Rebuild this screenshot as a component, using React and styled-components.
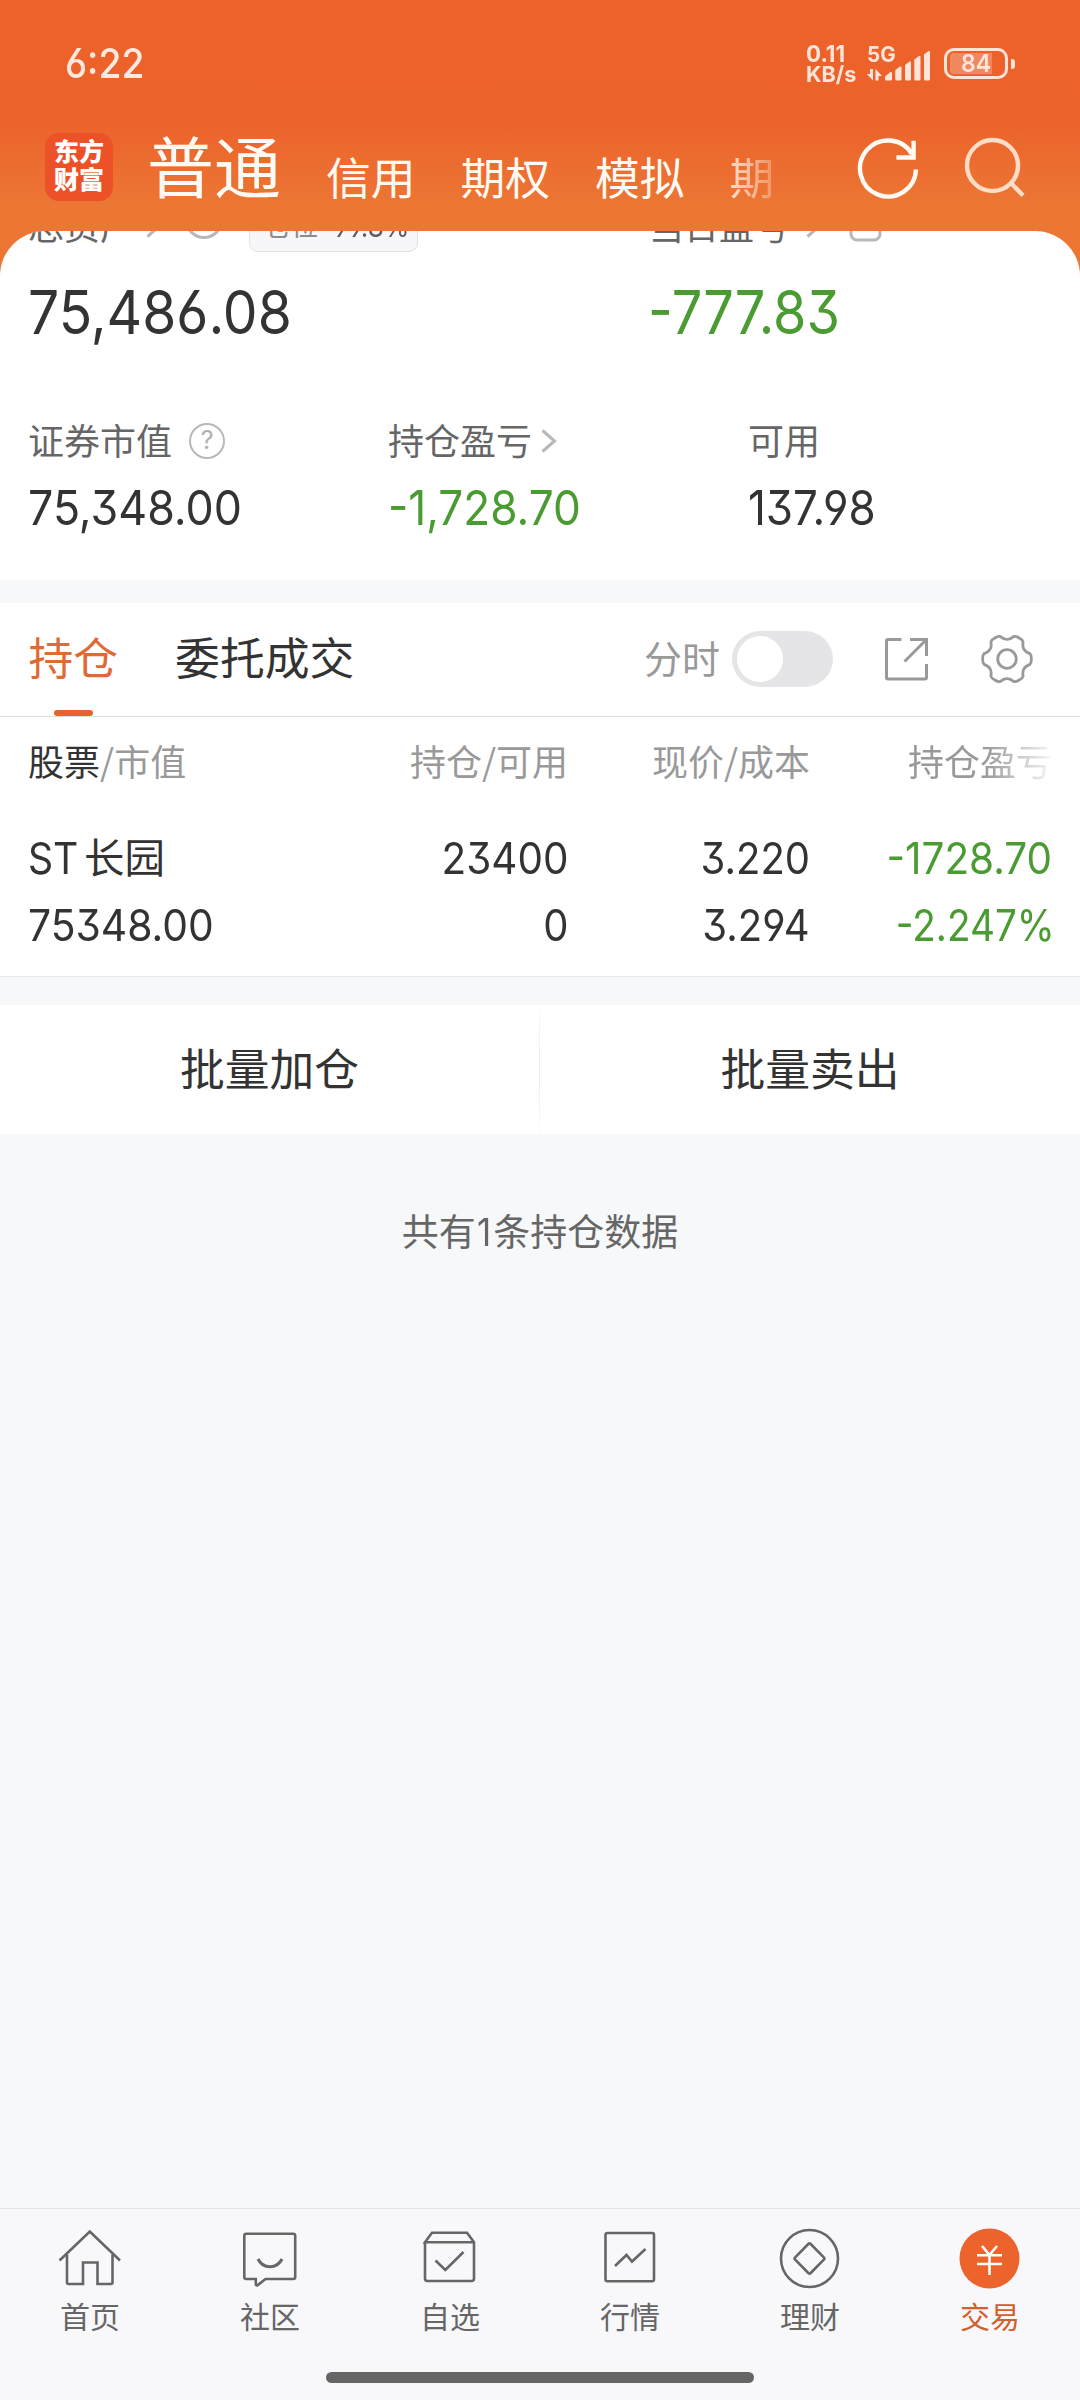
import React from 'react';
import styled, { createGlobalStyle, css } from 'styled-components';

const CJK = "'Noto Sans CJK SC', 'Noto Sans', sans-serif";
const NUM = "Inter, 'Noto Sans CJK SC', sans-serif";
const INK = '#333333';
const GREY = '#666666';
const LIGHT = '#999999';
const GREEN = '#4b9b33';
const ORANGE = '#ec632b';
const STATUS = '#ffe5d9';

const Global = createGlobalStyle`
  * { box-sizing: border-box; }
  html, body { margin: 0; padding: 0; background: #f7f8fa; }
`;

const Screen = styled.div`
  width: 1080px;
  height: 2400px;
  display: flex;
  flex-direction: column;
  overflow: hidden;
  font-family: ${CJK};
  color: ${INK};
  background: linear-gradient(#ee622b 0, #ec622b 118px, #ec7634 205px, #ee7634 280px, #f7f8fa 280px);
`;

/* Latin digits, slightly condensed */
const Num = styled.span`
  display: inline-block;
  flex: none;
  align-self: ${(p) => p.$self || 'auto'};
  font-family: ${NUM};
  font-feature-settings: 'cv03', 'cv04', 'cv09', 'case';
  font-size: ${(p) => p.$size}px;
  line-height: ${(p) => p.$lh || p.$size}px;
  font-weight: ${(p) => p.$weight || 420};
  color: ${(p) => p.$color || INK};
  margin: ${(p) => p.$m || 0};
  white-space: nowrap;
  transform: scaleX(${(p) => p.$sx || 0.92});
  transform-origin: ${(p) => (p.$right ? 'right' : 'left')} center;
`;

/* Chinese text; the negative margin centres the glyphs optically */
const Text = styled.span`
  flex: none;
  margin-top: -0.11em;
  font-size: ${(p) => p.$size}px;
  line-height: ${(p) => p.$size}px;
  color: ${(p) => p.$color || INK};
  white-space: nowrap;
`;

const Glyph = styled.svg`
  display: block;
  flex: none;
  fill: none;
  stroke: ${(p) => p.$color || '#b8b8b8'};
  stroke-width: ${(p) => p.$w || 3};
  margin: ${(p) => p.$m || 0};
`;

/* ---------- status bar ---------- */
const StatusBar = styled.div`
  height: 118px;
  flex: none;
  padding: 9px 65px 0 65px;
  display: flex;
  align-items: center;
  justify-content: space-between;
`;
const StatusRight = styled.div`
  display: flex;
  align-items: center;
  height: 36px;
`;
const Speed = styled.div`
  width: 60px;
  display: flex;
  flex-direction: column;
  align-items: flex-start;
`;
const Signal = styled.div`
  position: relative;
  width: 66px;
  height: 36px;
  margin-right: 12px;
`;
const Network = styled.div`
  position: absolute;
  left: 1px;
  top: -2px;
  display: flex;
`;
const Bars = styled.svg`
  display: block;
  width: 66px;
  height: 36px;
  fill: ${STATUS};
`;
const Battery = styled.div`
  width: 64px;
  height: 31px;
  border: 3px solid ${STATUS};
  border-radius: 10px;
  padding: 2px 3px;
  display: flex;
`;
const BatteryLevel = styled.div`
  width: 42px;
  border-radius: 4px 0 0 4px;
  background: rgba(255, 255, 255, 0.25);
  display: flex;
  align-items: center;
  padding-left: 11px;
`;
const Nub = styled.div`
  width: 4px;
  height: 10px;
  margin-left: 3px;
  border-radius: 1px 3px 3px 1px;
  background: ${STATUS};
`;

/* ---------- account header ---------- */
const Header = styled.header`
  height: 113px;
  flex: none;
  padding-left: 45px;
  display: flex;
  align-items: flex-start;
`;
const Logo = styled.div`
  width: 68px;
  height: 68px;
  margin-top: 15px;
  border-radius: 14px;
  background: #ec5127;
  color: #fff;
  display: flex;
  flex-direction: column;
  align-items: center;
  padding-top: 5px;
  gap: 3px;
`;
const LogoLine = styled.span`
  font-size: 25px;
  line-height: 25px;
  font-weight: 900;
`;
const Accounts = styled.nav`
  width: 656px;
  height: 113px;
  margin-left: 34px;
  display: flex;
  align-items: baseline;
  gap: 44.9px;
  color: #fffaf3;
`;
const Account = styled.span`
  font-size: ${(p) => (p.$active ? 67 : 44.8)}px;
  line-height: 96px;
  white-space: nowrap;
  flex: none;
  transform: translateY(${(p) => (p.$active ? -2 : 0)}px);
  ${(p) =>
    p.$faded &&
    css`
      mask-image: linear-gradient(90deg, rgba(0, 0, 0, 0.8) 0, rgba(0, 0, 0, 0.25) 100%);
    `}
`;
const HeaderIcon = styled.svg`
  width: 66px;
  height: 66px;
  margin-top: 17px;
  margin-left: ${(p) => p.$gap || 0}px;
  flex: none;
  fill: none;
  stroke: ${(p) => p.$color};
  stroke-width: 4.4;
`;

/* ---------- assets ---------- */
const Assets = styled.section`
  height: 349px;
  flex: none;
  background: #fff;
  border-radius: 45px 45px 0 0;
  overflow: hidden;
  padding: 0 28px;
`;
const ClippedRow = styled.div`
  height: 52px;
  margin-top: -31px;
  display: grid;
  grid-template-columns: 621px 1fr;
`;
const ClippedCell = styled.div`
  display: flex;
  align-items: center;
`;
const Badge = styled.div`
  height: 52px;
  width: 169px;
  margin-left: 26px;
  border: 1.5px solid #e1e1e6;
  border-radius: 9px;
  background: #f7f7fa;
  display: flex;
  align-items: center;
  padding-left: 14px;
`;
const Totals = styled.div`
  height: 121px;
  padding-bottom: 1px;
  display: grid;
  align-items: center;
  grid-template-columns: 621px 1fr;
`;
const Stats = styled.div`
  padding-top: 50px;
  display: grid;
  grid-template-columns: 360px 360px 1fr;
`;
const Stat = styled.div`
  display: flex;
  flex-direction: column;
  align-items: flex-start;
  gap: 25px;
`;
const StatLabel = styled.div`
  display: flex;
  align-items: center;
  height: 36px;
`;
const Help = styled.div`
  width: 36px;
  height: 36px;
  margin-left: 17px;
  border: 2.5px solid #b8b8b8;
  border-radius: 50%;
  color: #b0b0b0;
  font-family: ${NUM};
  font-size: 25px;
  line-height: 31px;
  text-align: center;
`;

/* ---------- holdings ---------- */
const Gap = styled.div`
  height: ${(p) => p.$h}px;
  flex: none;
  background: #f7f8fa;
  border-top: ${(p) => (p.$line ? '1px solid #e8e9ec' : 'none')};
`;
const Tabs = styled.div`
  height: 114px;
  flex: none;
  background: #fff;
  border-bottom: 1px solid #dedfe1;
  padding: 0 45px 0 28.5px;
  display: flex;
`;
const Tab = styled.div`
  height: 113px;
  margin-right: 57px;
  display: flex;
  flex-direction: column;
  align-items: center;
  justify-content: space-between;
  font-size: 44.8px;
  line-height: 106px;
  color: ${(p) => (p.$active ? '#df6a36' : INK)};
  ${(p) =>
    p.$active &&
    css`
      &::after {
        content: '';
        width: 39px;
        height: 6px;
        border-radius: 3px;
        background: #e9622e;
      }
    `}
`;
const Tools = styled.div`
  margin-left: auto;
  display: flex;
  align-items: center;
  height: 112px;
`;
const Toggle = styled.div`
  width: 101px;
  height: 56px;
  margin-left: 12px;
  border-radius: 28px;
  background: #e5e5e7;
  display: flex;
  align-items: center;
  padding-left: 5px;
  &::after {
    content: '';
    width: 46px;
    height: 46px;
    border-radius: 50%;
    background: #fff;
  }
`;
const Table = styled.div`
  height: 259px;
  flex: none;
  background: #fff;
  padding: 27px 28px 0;
`;
const Row = styled.div`
  height: ${(p) => p.$h}px;
  margin-bottom: ${(p) => p.$gap || 0}px;
  display: grid;
  grid-template-columns: 300px 240px 242px 1fr;
`;
const Cell = styled.div`
  display: flex;
  justify-content: ${(p) => (p.$left ? 'flex-start' : 'flex-end')};
  align-items: center;
`;
const Faded = styled(Cell)`
  mask-image: linear-gradient(90deg, #000 175px, transparent 248px);
`;
const Actions = styled.div`
  height: 129px;
  flex: none;
  background: #fff;
  display: grid;
  grid-template-columns: 539px 1px 540px;
`;
const Action = styled.button`
  border: 0;
  padding: 0 0 7px;
  background: none;
  font-family: ${CJK};
  font-size: 44.8px;
  line-height: 45px;
  color: ${INK};
`;
const Divider = styled.div`
  background: linear-gradient(#fafafb, #ececef, #fafafb);
`;
const Summary = styled.div`
  flex: 1;
  background: #f7f8fa;
  padding-top: 78px;
  display: flex;
  align-items: flex-start;
  justify-content: center;
  font-size: 37px;
  line-height: 37px;
  color: ${GREY};
`;

/* ---------- bottom navigation ---------- */
const Nav = styled.nav`
  height: 192px;
  flex: none;
  background: #f8f8fb;
  border-top: 1px solid #e4e4e8;
`;
const NavItems = styled.div`
  height: 163px;
  padding-top: 19px;
  display: grid;
  grid-template-columns: repeat(6, 1fr);
`;
const NavItem = styled.div`
  display: flex;
  flex-direction: column;
  align-items: center;
  gap: 8px;
  font-size: 30px;
  line-height: 30px;
  color: ${(p) => (p.$active ? '#d2602c' : GREY)};
`;
const Indicator = styled.div`
  width: 428px;
  height: 11px;
  margin: 0 auto;
  border-radius: 6px;
  background: #666;
`;

const Chevron = ({ m }) => (
  <Glyph width="16" height="26" viewBox="0 0 16 26" $m={m}>
    <path d="M1.500 2.500 L13.500 13 L1.500 23.500" />
  </Glyph>
);

const polar = (r, deg) => {
  const a = (deg * Math.PI) / 180;
  return `${(28 + r * Math.cos(a)).toFixed(2)} ${(28 + r * Math.sin(a)).toFixed(2)}`;
};
const gearPath = () => {
  let d = `M${polar(23.6, -13)}`;
  for (let a = 0; a < 360; a += 60) {
    d += ` Q${polar(24.8, a - 9)} ${polar(24.3, a)} Q${polar(24.8, a + 9)} ${polar(23.6, a + 13)}`;
    d += ` C${polar(20.4, a + 19)} ${polar(19.6, a + 23)} ${polar(19.6, a + 30)}`;
    d += ` C${polar(19.6, a + 37)} ${polar(20.4, a + 41)} ${polar(23.6, a + 47)}`;
  }
  return d + 'Z';
};

const NAV = [
  {
    label: '首页',
    icon: (
      <>
        <path d="M1.500 32.500 L31.800 3.500 L62 32.500" />
        <path d="M9 26.500 V54.500 Q9 56 10.500 56 H25 V34.500 H39.500 V56 H53 Q54.500 56 54.500 54.500 V26.500" />
      </>
    ),
  },
  {
    label: '社区',
    icon: (
      <>
        <path d="M8.300 5.800 H55.200 Q57.200 5.800 57.200 7.800 V49 Q57.200 51 55.200 51 H27.500 L19.500 57.300 Q17.800 58 17.800 56 V51 H8.300 Q6.300 51 6.300 49 V7.800 Q6.300 5.800 8.300 5.800Z" />
        <path strokeWidth="3" d="M20 31 C25 41.300 39 41.300 44 31" />
      </>
    ),
  },
  {
    label: '自选',
    icon: (
      <>
        <path d="M7 14.200 V50.500 Q7 53 9.500 53 H53.500 Q56 53 56 50.500 V14.200 L49 4.800 H14 L7 14.200 H56" />
        <path d="M17.500 32.500 L27.300 42 L45.500 24" />
      </>
    ),
  },
  {
    label: '行情',
    icon: (
      <>
        <rect x="7.500" y="5" width="48.500" height="48.200" rx="2" />
        <path d="M17 38 L28.500 27 L34 33.500 L47.500 21" />
      </>
    ),
  },
  {
    label: '理财',
    icon: (
      <>
        <circle cx="31.500" cy="30.500" r="28.500" />
        <path d="M30.300 16 Q31.500 14.800 32.700 16 L45.800 29.300 Q47 30.500 45.800 31.700 L32.700 45 Q31.500 46.200 30.300 45 L17.200 31.700 Q16 30.500 17.200 29.300Z" />
      </>
    ),
  },
  {
    label: '交易',
    active: true,
    icon: (
      <>
        <circle cx="31.500" cy="30.500" r="30" fill={ORANGE} stroke="none" />
        <path
          stroke="#fff"
          d="M24 18 L31.500 27 L39 18 M19 27.300 H44 M19 36 H44 M31.500 27 V47"
        />
      </>
    ),
  },
];

const STATS = [
  { label: '证券市值', value: '75,348.00', sx: 0.932, mark: 'help' },
  { label: '持仓盈亏', value: '-1,728.70', sx: 0.92, mark: 'chevron', color: GREEN },
  { label: '可用', value: '137.98', sx: 0.915 },
];

export default function App() {
  return (
    <Screen>
      <Global />
      <StatusBar>
        <Num $size={41} $weight={520} $color="#ffe9df" $sx={0.91}>6:22</Num>
        <StatusRight>
          <Speed>
            <Num $size={23.5} $lh={20} $weight={750} $color={STATUS} $sx={0.95}>0.11</Num>
            <Num $size={22} $lh={20} $weight={700} $color={STATUS} $sx={0.98}>KB/s</Num>
          </Speed>
          <Signal>
            <Bars viewBox="0 0 66 36">
              <path d="M19 33 V30.500 L24.500 26 Q26 25.500 26 27 V33 Q26 34.500 24.500 34.500 H20.500 Q19 34.500 19 33Z" />
              <path d="M29.300 33 V24 L34 20.500 Q35.500 20 35.500 21.500 V33 Q35.500 34.500 34 34.500 H30.800 Q29.300 34.500 29.300 33Z" />
              <path d="M39 33 V19 L43.500 15.500 Q45 15 45 16.500 V33 Q45 34.500 43.500 34.500 H40.500 Q39 34.500 39 33Z" />
              <path d="M48.300 33 V13.500 L53 10 Q54.500 9.500 54.500 11 V33 Q54.500 34.500 53 34.500 H49.800 Q48.300 34.500 48.300 33Z" />
              <path d="M58 33 V8.500 L62.500 5 Q64 4.500 64 6 V33 Q64 34.500 62.500 34.500 H59.500 Q58 34.500 58 33Z" />
              <path d="M4 23 H7 V34.500 L0.800 28 H4Z M9.500 34.500 H12.500 V30 H16 L9.500 23Z" />
            </Bars>
            <Network>
              <Num $size={21.5} $weight={700} $color={STATUS} $sx={0.96}>5G</Num>
            </Network>
          </Signal>
          <Battery>
            <BatteryLevel>
              <Num $size={24.5} $weight={600} $color={STATUS} $sx={0.94}>84</Num>
            </BatteryLevel>
          </Battery>
          <Nub />
        </StatusRight>
      </StatusBar>

      <Header>
        <Logo>
          <LogoLine>东方</LogoLine>
          <LogoLine>财富</LogoLine>
        </Logo>
        <Accounts>
          <Account $active>普通</Account>
          <Account>信用</Account>
          <Account>期权</Account>
          <Account>模拟</Account>
          <Account $faded>期</Account>
        </Accounts>
        <HeaderIcon viewBox="0 0 66 66" $color="#fffaf3" $gap={52}>
          <path d="M61 34.500 A28 28 0 1 1 57 19" />
          <path d="M58.600 5.700 V22.500 H41.400" />
        </HeaderIcon>
        <HeaderIcon viewBox="0 0 66 66" $color="#ffdcc6" $gap={41}>
          <circle cx="30.500" cy="30.500" r="25.500" />
          <path d="M48.500 47.500 L61 60.500" />
        </HeaderIcon>
      </Header>

      <Assets>
        <ClippedRow>
          <ClippedCell>
            <Text $size={36} $color={GREY}>总资产</Text>
            <Chevron m="0 0 0 10px" />
            <Glyph width="38" height="38" viewBox="0 0 38 38" $m="-12px 0 0 23px">
              <circle cx="19" cy="19" r="17.500" />
            </Glyph>
            <Badge>
              <Text $size={27} $color="#8c8c8c">仓位</Text>
              <Num $size={29} $color="#5c5c5c" $m="0 0 0 15px" $sx={0.9}>99.8%</Num>
            </Badge>
          </ClippedCell>
          <ClippedCell>
            <Text $size={35} $color={GREY}>当日盈亏</Text>
            <Chevron m="0 0 0 17px" />
            <Glyph width="34" height="34" viewBox="0 0 34 34" $m="0 0 0 27px">
              <rect x="2" y="2" width="29" height="29" rx="6" />
            </Glyph>
          </ClippedCell>
        </ClippedRow>
        <Totals>
          <Num $size={60} $sx={0.919} $self="center">75,486.08</Num>
          <Num $size={60} $color={GREEN} $sx={0.9} $m="0 0 0 -1px">-777.83</Num>
        </Totals>
        <Stats>
          {STATS.map((s) => (
            <Stat key={s.label}>
              <StatLabel>
                <Text $size={36} $color={GREY}>{s.label}</Text>
                {s.mark === 'help' && <Help>?</Help>}
                {s.mark === 'chevron' && <Chevron m="0 0 0 9px" />}
              </StatLabel>
              <Num $size={48} $color={s.color} $sx={s.sx}>{s.value}</Num>
            </Stat>
          ))}
        </Stats>
      </Assets>

      <Gap $h={23} />
      <Tabs>
        <Tab $active>持仓</Tab>
        <Tab>委托成交</Tab>
        <Tools>
          <Text $size={38} $color={LIGHT}>分时</Text>
          <Toggle />
          <Glyph width="44" height="44" viewBox="0 0 44 44" $color={LIGHT} $m="0 0 0 51px">
            <path d="M17.500 2.500 H4 Q2.500 2.500 2.500 4 V40.500 Q2.500 42 4 42 H41 Q42.500 42 42.500 40.500 V27" />
            <path d="M26 2.500 H42.500 V19 M42.500 2.500 L20.500 24.500" />
          </Glyph>
          <Glyph width="56" height="56" viewBox="0 0 56 56" $color={LIGHT} $w={2.8} $m="0 0 0 51px">
            <path d={gearPath()} />
            <circle cx="28" cy="28" r="9.300" />
          </Glyph>
        </Tools>
      </Tabs>

      <Table>
        <Row $h={36} $gap={45}>
          <Cell $left>
            <Text $size={36}>股票</Text>
            <Text $size={36} $color={LIGHT}>/市值</Text>
          </Cell>
          <Cell><Text $size={36} $color={LIGHT}>持仓/可用</Text></Cell>
          <Cell><Text $size={36} $color={LIGHT}>现价/成本</Text></Cell>
          <Faded><Text $size={36} $color={LIGHT}>持仓盈亏</Text></Faded>
        </Row>
        <Row $h={67}>
          <Cell $left>
            <Num $size={43.5} $sx={0.9}>ST</Num>
            <Text $size={40.5}>长园</Text>
          </Cell>
          <Cell><Num $right $size={43.5} $sx={0.93}>23400</Num></Cell>
          <Cell><Num $right $size={43.5}>3.220</Num></Cell>
          <Cell><Num $right $size={43.5} $color={GREEN} $sx={0.93}>-1728.70</Num></Cell>
        </Row>
        <Row $h={67}>
          <Cell $left><Num $size={43.5} $sx={0.938}>75348.00</Num></Cell>
          <Cell><Num $right $size={43.5}>0</Num></Cell>
          <Cell><Num $right $size={43.5}>3.294</Num></Cell>
          <Cell><Num $right $size={43.5} $color={GREEN} $sx={0.89} $m="0 -3px 0 0">-2.247%</Num></Cell>
        </Row>
      </Table>
      <Gap $h={29} $line />
      <Actions>
        <Action>批量加仓</Action>
        <Divider />
        <Action>批量卖出</Action>
      </Actions>
      <Summary>
        <span>共有</span>
        <Num $size={38} $lh={40} $color={GREY} $m="0 1px">1</Num>
        <span>条持仓数据</span>
      </Summary>

      <Nav>
        <NavItems>
          {NAV.map((n) => (
            <NavItem key={n.label} $active={n.active}>
              <Glyph width="64" height="64" viewBox="0 0 64 64" $color={GREY} $w={2.6}>
                {n.icon}
              </Glyph>
              {n.label}
            </NavItem>
          ))}
        </NavItems>
        <Indicator />
      </Nav>
    </Screen>
  );
}
